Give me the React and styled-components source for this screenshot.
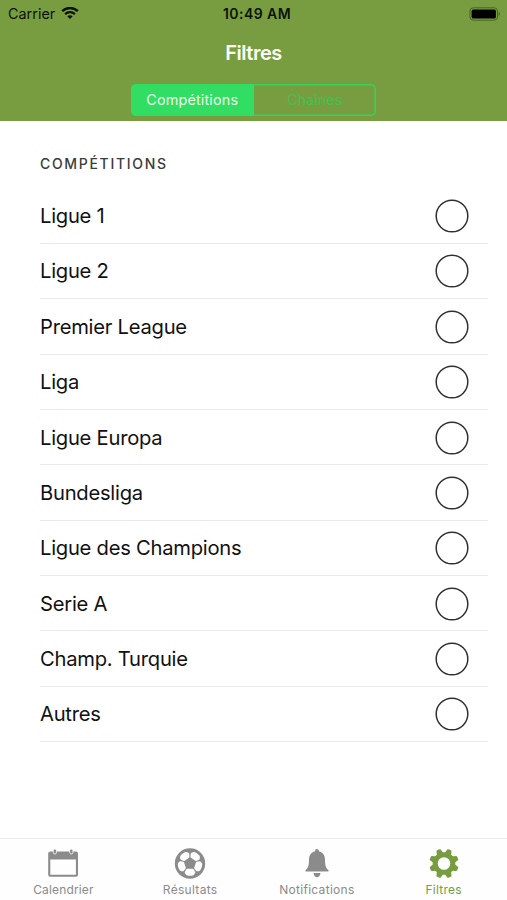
import React from "react";
import styled, { createGlobalStyle } from "styled-components";

const GlobalStyle = createGlobalStyle`
  * { box-sizing: border-box; }
  body { margin: 0; background: #fff; font-family: Inter, "Liberation Sans", sans-serif; }
`;

const Screen = styled.div`
  width: 507px;
  height: 900px;
  display: flex;
  flex-direction: column;
  background: #fff;
  overflow: hidden;
`;

const Header = styled.header`
  height: 121px;
  flex: none;
  background: #789d41;
  display: flex;
  flex-direction: column;
  align-items: center;
`;

const StatusBar = styled.div`
  width: 100%;
  height: 27px;
  padding: 0 6px 0 8px;
  display: grid;
  grid-template-columns: 1fr auto 1fr;
  align-items: center;
  color: #0c1206;
`;

const Carrier = styled.div`
  display: flex;
  align-items: center;
  gap: 6px;
  font-size: 14.3px;
  letter-spacing: 0.05px;
  line-height: 27px;
`;

const Clock = styled.div`
  font-size: 14px;
  font-weight: 600;
  letter-spacing: 0.45px;
  line-height: 27px;
  padding-left: 5px;
`;

const Battery = styled.svg`
  justify-self: end;
`;

const Title = styled.h1`
  margin: 10px 0 0;
  font-size: 20px;
  line-height: 32px;
  font-weight: 600;
  letter-spacing: -0.45px;
  color: #fbfff4;
`;

const Segments = styled.div`
  margin-top: 15px;
  width: 245px;
  height: 32px;
  display: grid;
  grid-template-columns: 1fr 1fr;
  border-radius: 5px;
  box-shadow: inset 0 0 0 1.6px #37d15a;
  overflow: hidden;
`;

const Segment = styled.button`
  border: 0;
  padding: 0;
  font: 400 14.4px/32px Inter, sans-serif;
  letter-spacing: ${(p) => (p.$active ? "0.15px" : "0")};
  background: ${(p) => (p.$active ? "#32dd63" : "transparent")};
  color: ${(p) => (p.$active ? "#e9ffe9" : "#46c04c")};
`;

const Content = styled.main`
  flex: 1;
  padding: 30px 19px 0 40px;
`;

const SectionTitle = styled.h2`
  margin: 0;
  height: 37.4px;
  font-size: 14px;
  line-height: 26px;
  font-weight: 500;
  letter-spacing: 1.68px;
  color: #3b3b3b;
`;

const List = styled.ul`
  list-style: none;
  margin: 0;
  padding: 0;
`;

const Row = styled.li`
  height: 55.38px;
  display: flex;
  align-items: center;
  justify-content: space-between;
  padding: 1px 19px 0 0;
  border-bottom: 1px solid #e9e9e9;
`;

const RowLabel = styled.span`
  font-size: 20.2px;
  line-height: 28px;
  letter-spacing: -0.25px;
  color: #111;
`;

const Radio = styled.svg`
  flex: none;
  color: #303030;
`;

const TabBar = styled.nav`
  height: 62px;
  flex: none;
  display: grid;
  grid-template-columns: repeat(4, 1fr);
  border-top: 1px solid #ebebeb;
  background: #fefefe;
`;

const Tab = styled.div`
  display: flex;
  flex-direction: column;
  align-items: center;
  padding-top: 8px;
  color: ${(p) => (p.$active ? "#789d41" : "#8b8b8b")};
`;

const TabLabel = styled.span`
  margin-top: 3px;
  font-size: 12px;
  line-height: 16px;
  letter-spacing: ${(p) => p.$spacing}px;
`;

const RadioCircle = () => (
  <Radio width="34" height="34" viewBox="0 0 34 34">
    <circle cx="17" cy="17" r="15.800" fill="none" stroke="currentColor" strokeWidth="1.500" />
  </Radio>
);

const WifiIcon = () => (
  <svg width="18" height="13" viewBox="0 0 18 13" fill="none" stroke="currentColor">
    <path d="M1.2 4.1C5.5-.1 12.500-.1 16.800 4.100" strokeWidth="2.400" />
    <path d="M4.100 7.100c2.700-2.600 7.100-2.600 9.800 0" strokeWidth="2.200" />
    <path d="M9 12 6.300 9.300c1.500-1.400 3.900-1.400 5.400 0z" fill="currentColor" stroke="none" />
  </svg>
);

const BatteryIcon = () => (
  <Battery width="32" height="14" viewBox="0 0 32 14">
    <rect x="1" y="0.8" width="27.5" height="12.4" rx="3.2" fill="none" stroke="#456722" strokeWidth="1" />
    <rect x="2.6" y="2.4" width="24.3" height="9.2" rx="1.6" fill="#000" />
    <path d="M29.7 4.8c1.6.7 1.6 3.7 0 4.4z" fill="#456722" />
  </Battery>
);

const CalendarIcon = () => (
  <svg width="32" height="32" viewBox="0 0 32 32">
    <path
      fillRule="evenodd"
      fill="currentColor"
      d="M3.200 4.500H29a2 2 0 0 1 2 2v21.300a2 2 0 0 1-2 2H3.200a2 2 0 0 1-2-2V6.500a2 2 0 0 1 2-2zM3.300 12.500v15.200h25.600V12.500z"
    />
    <g fill="currentColor" stroke="#fefefe" strokeWidth="0.800">
      <rect x="6.300" y="2" width="3.200" height="5" rx="1.600" />
      <rect x="22.700" y="2" width="3.200" height="5" rx="1.600" />
    </g>
  </svg>
);

const BallIcon = () => (
  <svg width="32" height="32" viewBox="0 0 32 32">
    <circle cx="16" cy="16.500" r="15.200" fill="currentColor" />
    {[0, 72, 144, 216, 288].map((angle) => (
      <path
        key={angle}
        transform={`rotate(${angle} 16 16.500)`}
        fill="#fefefe"
        d="M13.300 21.800h5.400q.6 0 .9.500l1.500 2.500q.3.500.1 1c-.4 1-.9 1.800-1.700 2.400-2 .8-5 .8-7 0-.8-.6-1.300-1.400-1.700-2.400q-.2-.5.1-1l1.500-2.500q.3-.5.9-.5z"
      />
    ))}
  </svg>
);

const BellIcon = () => (
  <svg width="32" height="32" viewBox="0 0 32 32" fill="currentColor">
    <path d="M16 2c-1.200 0-1.900.8-1.900 2.200C9.900 5.200 8 8.600 8 12.600c0 5.700-.7 8.600-3.500 10.600v1.300h23v-1.300c-2.800-2-3.500-4.900-3.500-10.600 0-4-1.900-7.400-6.100-8.400C17.900 2.800 17.200 2 16 2z" />
    <path d="M12.500 26h7c-.5 3-1.900 4.200-3.500 4.200s-3-1.200-3.500-4.200z" />
  </svg>
);

const GearIcon = () => (
  <svg width="32" height="32" viewBox="0 0 32 32">
    <g fill="currentColor">
      {[22.5, 67.5, 112.5, 157.5, 202.5, 247.5, 292.5, 337.5].map((angle) => (
        <path
          key={angle}
          transform={`rotate(${angle} 16 16.500)`}
          d="M11.500 7.500c1.500-1 1.700-3.800 2.200-5.100.2-.5.500-.7 1-.7h2.600c.5 0 .8.2 1 .7.500 1.300.700 4.100 2.200 5.100z"
        />
      ))}
    </g>
    <circle cx="16" cy="16.500" r="8.800" fill="none" stroke="currentColor" strokeWidth="5" />
  </svg>
);

const competitions = [
  "Ligue 1",
  "Ligue 2",
  "Premier League",
  "Liga",
  "Ligue Europa",
  "Bundesliga",
  "Ligue des Champions",
  "Serie A",
  "Champ. Turquie",
  "Autres",
];

const tabs = [
  { label: "Calendrier", Icon: CalendarIcon, spacing: 0.15 },
  { label: "Résultats", Icon: BallIcon, spacing: 0.3 },
  { label: "Notifications", Icon: BellIcon, spacing: 0.3 },
  { label: "Filtres", Icon: GearIcon, spacing: 0.25, active: true },
];

export default function App() {
  return (
    <>
      <GlobalStyle />
      <Screen>
        <Header>
          <StatusBar>
            <Carrier>
              Carrier
              <WifiIcon />
            </Carrier>
            <Clock>10:49 AM</Clock>
            <BatteryIcon />
          </StatusBar>
          <Title>Filtres</Title>
          <Segments>
            <Segment $active>Compétitions</Segment>
            <Segment>Chaînes</Segment>
          </Segments>
        </Header>
        <Content>
          <SectionTitle>COMPÉTITIONS</SectionTitle>
          <List>
            {competitions.map((name) => (
              <Row key={name}>
                <RowLabel>{name}</RowLabel>
                <RadioCircle />
              </Row>
            ))}
          </List>
        </Content>
        <TabBar>
          {tabs.map(({ label, Icon, spacing, active }) => (
            <Tab key={label} $active={active}>
              <Icon />
              <TabLabel $spacing={spacing}>{label}</TabLabel>
            </Tab>
          ))}
        </TabBar>
      </Screen>
    </>
  );
}
